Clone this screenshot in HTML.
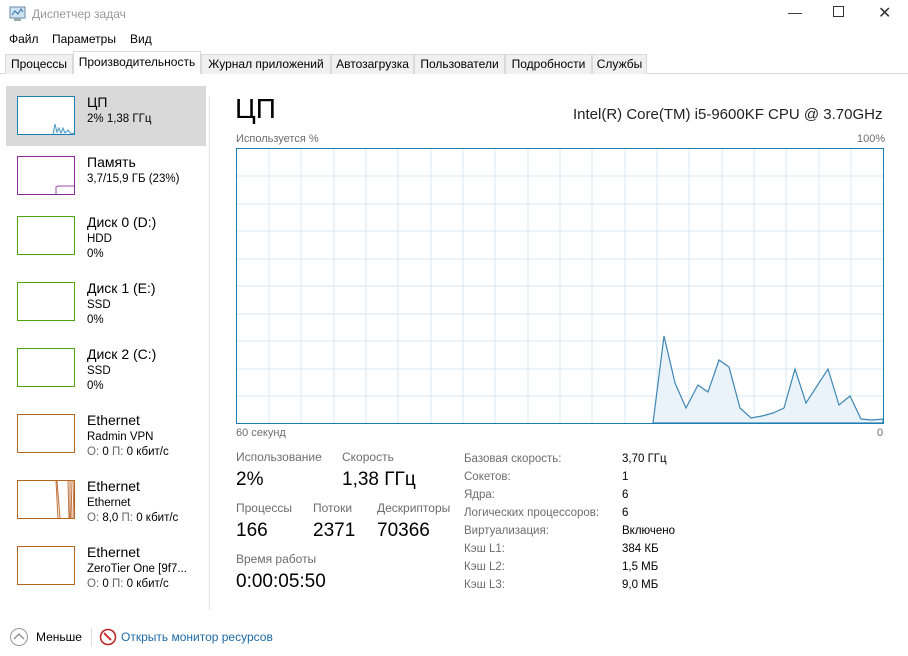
<!DOCTYPE html>
<html><head><meta charset="utf-8"><style>
*{margin:0;padding:0;box-sizing:border-box}
body{width:908px;height:656px;background:#fff;font-family:"Liberation Sans","DejaVu Sans",sans-serif;color:#000;position:relative;overflow:hidden;font-size:12px}
.a{position:absolute;white-space:nowrap}
.tab{position:absolute;top:54px;height:20px;border:1px solid #d9d9d9;border-bottom:none;background:#f0f0f0;font-size:12px;line-height:18px;text-align:center}
.th{position:absolute;left:17px;width:58px;height:39px;background:#fff}
.t1{font-size:14px}
.t2{font-size:11.5px}
.g{color:#666}
.lab{color:#6d6d6d;font-size:12px}
.big{font-size:19px}
</style></head><body>
<div class="a" style="left:0;top:0;width:908px;height:30px;background:#fff"></div>
<svg class="a" style="left:9px;top:6px" width="18" height="16"><rect x="1" y="1" width="15" height="11" fill="#cfe3f3" stroke="#6a8aa8"/><polyline points="3,9 6,5 9,8 12,3 14,6" fill="none" stroke="#2b6ea8"/><rect x="5" y="12" width="7" height="3" fill="#9aa"/></svg>
<div class="a" style="left:32px;top:7px;font-size:12px;color:#999">Диспетчер задач</div>
<div class="a" style="left:788px;top:4px;color:#333;font-size:14px">&#8212;</div>
<div class="a" style="left:833px;top:6px;width:11px;height:11px;border:1px solid #333"></div>
<div class="a" style="left:878px;top:3px;color:#333;font-size:16px">&#10005;</div>
<div class="a" style="left:9px;top:32px;font-size:12px">Файл</div>
<div class="a" style="left:52px;top:32px;font-size:12px">Параметры</div>
<div class="a" style="left:130px;top:32px;font-size:12px">Вид</div>
<div class="a" style="left:0;top:73px;width:908px;height:1px;background:#d9d9d9"></div>
<div class="tab" style="left:5px;width:68px">Процессы</div>
<div class="tab" style="left:73px;width:128px;top:51px;height:23px;background:#fff;line-height:21px">Производительность</div>
<div class="tab" style="left:201px;width:130px">Журнал приложений</div>
<div class="tab" style="left:331px;width:83px">Автозагрузка</div>
<div class="tab" style="left:414px;width:91px">Пользователи</div>
<div class="tab" style="left:505px;width:87px">Подробности</div>
<div class="tab" style="left:592px;width:55px">Службы</div>

<div class="a" style="left:6px;top:86px;width:200px;height:60px;background:#d9d9d9"></div>
<div class="a" style="left:209px;top:96px;width:1px;height:514px;background:#e5e5e5"></div>

<div class="th" style="top:96px;border:1px solid #1a7fb5"></div>
<svg class="a" style="left:18px;top:120px" width="56" height="14"><polyline points="35,14 37,4 39,12 41,8 43,13 45,8 47,13 50,10 53,14 56,13" fill="#e6f0f8" stroke="#4a97c3"/></svg>
<div class="a t1" style="left:87px;top:94px">ЦП</div>
<div class="a t2" style="left:87px;top:113px">2% 1,38 ГГц</div>

<div class="th" style="top:156px;border:1px solid #8b2a9b"></div>
<svg class="a" style="left:18px;top:182px" width="56" height="12"><polyline points="38,12 38,5 40,4 56,4" fill="none" stroke="#9b4aab"/></svg>
<div class="a t1" style="left:87px;top:154px">Память</div>
<div class="a t2" style="left:87px;top:173px">3,7/15,9 ГБ (23%)</div>

<div class="th" style="top:216px;border:1px solid #4da60c"></div>
<div class="a t1" style="left:87px;top:214px">Диск 0 (D:)</div>
<div class="a t2" style="left:87px;top:233px">HDD</div>
<div class="a t2" style="left:87px;top:248px">0%</div>

<div class="th" style="top:282px;border:1px solid #4da60c"></div>
<div class="a t1" style="left:87px;top:280px">Диск 1 (E:)</div>
<div class="a t2" style="left:87px;top:299px">SSD</div>
<div class="a t2" style="left:87px;top:314px">0%</div>

<div class="th" style="top:348px;border:1px solid #4da60c"></div>
<div class="a t1" style="left:87px;top:346px">Диск 2 (C:)</div>
<div class="a t2" style="left:87px;top:365px">SSD</div>
<div class="a t2" style="left:87px;top:380px">0%</div>

<div class="th" style="top:414px;border:1px solid #b5651d"></div>
<div class="a t1" style="left:87px;top:412px">Ethernet</div>
<div class="a t2" style="left:87px;top:431px">Radmin VPN</div>
<div class="a t2" style="left:87px;top:446px"><span class="g">О:</span> 0 <span class="g">П:</span> 0 кбит/с</div>

<div class="th" style="top:480px;border:1px solid #b5651d"></div>
<svg class="a" style="left:18px;top:481px" width="56" height="37"><g stroke="#c0703a" stroke-width="1"><line x1="38" y1="0" x2="40" y2="37"/><line x1="39" y1="0" x2="42" y2="37"/><line x1="50" y1="0" x2="51" y2="37"/><line x1="52" y1="0" x2="52" y2="37"/><line x1="54" y1="0" x2="53" y2="37"/><line x1="56" y1="0" x2="55" y2="37"/></g></svg>
<div class="a t1" style="left:87px;top:478px">Ethernet</div>
<div class="a t2" style="left:87px;top:497px">Ethernet</div>
<div class="a t2" style="left:87px;top:512px"><span class="g">О:</span> 8,0 <span class="g">П:</span> 0 кбит/с</div>

<div class="th" style="top:546px;border:1px solid #b5651d"></div>
<div class="a t1" style="left:87px;top:544px">Ethernet</div>
<div class="a t2" style="left:87px;top:563px">ZeroTier One [9f7...</div>
<div class="a t2" style="left:87px;top:578px"><span class="g">О:</span> 0 <span class="g">П:</span> 0 кбит/с</div>

<div class="a" style="left:235px;top:93px;font-size:28px">ЦП</div>
<div class="a" style="left:573px;top:106px;font-size:15px;color:#222">Intel(R) Core(TM) i5-9600KF CPU @ 3.70GHz</div>
<div class="a lab" style="left:236px;top:133px;font-size:11px">Используется %</div>
<div class="a lab" style="left:857px;top:133px;font-size:11px">100%</div>

<svg class="a" style="left:236px;top:148px" width="649" height="277">
<g stroke="#d9eaf4" stroke-width="1">
<line x1="33" y1="1" x2="33" y2="275"/><line x1="65" y1="1" x2="65" y2="275"/><line x1="98" y1="1" x2="98" y2="275"/><line x1="130" y1="1" x2="130" y2="275"/><line x1="162" y1="1" x2="162" y2="275"/><line x1="195" y1="1" x2="195" y2="275"/><line x1="227" y1="1" x2="227" y2="275"/><line x1="259" y1="1" x2="259" y2="275"/><line x1="292" y1="1" x2="292" y2="275"/><line x1="324" y1="1" x2="324" y2="275"/><line x1="356" y1="1" x2="356" y2="275"/><line x1="389" y1="1" x2="389" y2="275"/><line x1="421" y1="1" x2="421" y2="275"/><line x1="453" y1="1" x2="453" y2="275"/><line x1="486" y1="1" x2="486" y2="275"/><line x1="518" y1="1" x2="518" y2="275"/><line x1="550" y1="1" x2="550" y2="275"/><line x1="583" y1="1" x2="583" y2="275"/><line x1="615" y1="1" x2="615" y2="275"/>
<line x1="1" y1="28" x2="647" y2="28"/><line x1="1" y1="56" x2="647" y2="56"/><line x1="1" y1="83" x2="647" y2="83"/><line x1="1" y1="111" x2="647" y2="111"/><line x1="1" y1="138" x2="647" y2="138"/><line x1="1" y1="166" x2="647" y2="166"/><line x1="1" y1="193" x2="647" y2="193"/><line x1="1" y1="221" x2="647" y2="221"/><line x1="1" y1="248" x2="647" y2="248"/>
</g>
<polygon points="417,275 428,188 439,235 450,260 462,237 472,244 483,212 493,219 504,260 515,270 526,268 537,265 548,260 559,221 570,255 592,221 603,257 614,248 625,271 636,272 647,271 647,275" fill="#eaf3fa" stroke="#3e87b4" stroke-width="1.2"/>
<rect x="0.5" y="0.5" width="647" height="275" fill="none" stroke="#1a7fb5"/>
</svg>
<div class="a lab" style="left:236px;top:427px;font-size:11px">60 секунд</div>
<div class="a lab" style="left:877px;top:427px;font-size:11px">0</div>

<div class="a lab" style="left:236px;top:450px">Использование</div>
<div class="a lab" style="left:342px;top:450px">Скорость</div>
<div class="a big" style="left:236px;top:469px">2%</div>
<div class="a big" style="left:342px;top:469px">1,38 ГГц</div>
<div class="a lab" style="left:236px;top:501px">Процессы</div>
<div class="a lab" style="left:313px;top:501px">Потоки</div>
<div class="a lab" style="left:377px;top:501px">Дескрипторы</div>
<div class="a big" style="left:236px;top:520px">166</div>
<div class="a big" style="left:313px;top:520px">2371</div>
<div class="a big" style="left:377px;top:520px">70366</div>
<div class="a lab" style="left:236px;top:552px">Время работы</div>
<div class="a big" style="left:236px;top:571px">0:00:05:50</div>

<div class="a lab" style="left:464px;top:450px;font-size:11.5px;line-height:18px">Базовая скорость:<br>Сокетов:<br>Ядра:<br>Логических процессоров:<br>Виртуализация:<br>Кэш L1:<br>Кэш L2:<br>Кэш L3:</div>
<div class="a" style="left:622px;top:450px;font-size:11.5px;line-height:18px">3,70 ГГц<br>1<br>6<br>6<br>Включено<br>384 КБ<br>1,5 МБ<br>9,0 МБ</div>

<svg class="a" style="left:9px;top:627px" width="20" height="20"><circle cx="10" cy="10" r="8.5" fill="#fff" stroke="#999"/><polyline points="5,12 10,7 15,12" fill="none" stroke="#888" stroke-width="1.3"/></svg>
<div class="a" style="left:36px;top:630px;font-size:12px">Меньше</div>
<div class="a" style="left:91px;top:628px;width:1px;height:18px;background:#ddd"></div>
<svg class="a" style="left:99px;top:628px" width="18" height="18"><circle cx="9" cy="9" r="7.5" fill="#fff" stroke="#b22" stroke-width="1.5"/><line x1="5" y1="5" x2="12" y2="12" stroke="#c33" stroke-width="2"/></svg>
<div class="a" style="left:121px;top:630px;font-size:12px;color:#1d6aa8">Открыть монитор ресурсов</div>
</body></html>
